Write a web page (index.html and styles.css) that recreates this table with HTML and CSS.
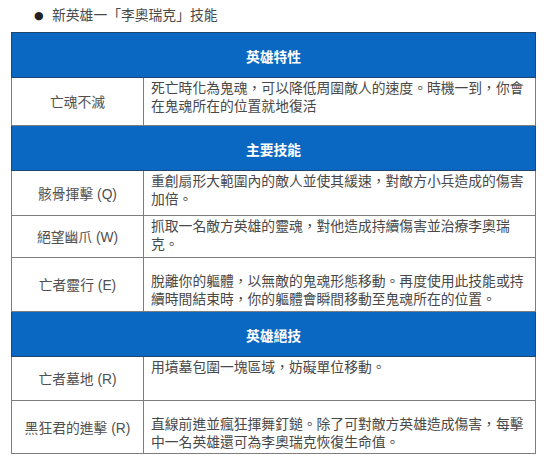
FILE: index.html
```html
<!DOCTYPE html>
<html lang="zh-Hant">
<head>
<meta charset="utf-8">
<title>新英雄一「李奧瑞克」技能</title>
<link rel="stylesheet" href="styles.css">
</head>
<body>
<div class="page">
  <p class="title"><span class="dot">●</span>新英雄一「李奧瑞克」技能</p>
  <table class="skills">
    <colgroup><col class="c-name"><col class="c-desc"></colgroup>
    <tr class="head"><th colspan="2">英雄特性</th></tr>
    <tr class="r-trait">
      <td class="name">亡魂不滅</td>
      <td class="desc">死亡時化為鬼魂，可以降低周圍敵人的速度。時機一到，你會<br>在鬼魂所在的位置就地復活</td>
    </tr>
    <tr class="head"><th colspan="2">主要技能</th></tr>
    <tr class="r-q">
      <td class="name">骸骨揮擊 (Q)</td>
      <td class="desc">重創扇形大範圍內的敵人並使其緩速，對敵方小兵造成的傷害<br>加倍。</td>
    </tr>
    <tr class="r-w">
      <td class="name">絕望幽爪 (W)</td>
      <td class="desc">抓取一名敵方英雄的靈魂，對他造成持續傷害並治療李奧瑞<br>克。</td>
    </tr>
    <tr class="r-e">
      <td class="name">亡者靈行 (E)</td>
      <td class="desc low">脫離你的軀體，以無敵的鬼魂形態移動。再度使用此技能或持<br>續時間結束時，你的軀體會瞬間移動至鬼魂所在的位置。</td>
    </tr>
    <tr class="head"><th colspan="2">英雄絕技</th></tr>
    <tr class="r-r1">
      <td class="name">亡者墓地 (R)</td>
      <td class="desc">用墳墓包圍一塊區域，妨礙單位移動。</td>
    </tr>
    <tr class="r-r2">
      <td class="name">黑狂君的進擊 (R)</td>
      <td class="desc low">直線前進並瘋狂揮舞釘鎚。除了可對敵方英雄造成傷害，每擊<br>中一名英雄還可為李奧瑞克恢復生命值。</td>
    </tr>
  </table>
</div>
</body>
</html>
```

FILE: styles.css
```css
html, body {
  margin: 0;
  padding: 0;
  background: #ffffff;
}

.page {
  padding: 7px 0 0 11px;
  font-family: "Liberation Sans", "Noto Sans CJK TC", sans-serif;
  color: #444444;
}

.title {
  margin: 0 0 7px 0;
  height: 18px;
  line-height: 18px;
  font-size: 13.8px;
  color: #4a4a4a;
  padding-left: 23px;
  display: flex;
  align-items: center;
}

.dot {
  font-size: 11px;
  width: 18px;
  color: #222222;
  font-family: "DejaVu Sans", sans-serif;
}

.skills {
  border-collapse: collapse;
  table-layout: fixed;
  width: 524px;
  border: 1px solid #8a8a8a;
  font-size: 13.8px;
  line-height: 18px;
}

.c-name { width: 132px; }
.c-desc { width: 392px; }

.head th {
  height: 45px;
  box-sizing: border-box;
  padding: 5px 0 0 0;
  background: #0b68c2;
  color: #ffffff;
  font-weight: bold;
  font-size: 13.8px;
  border: 1px solid #1f4670;
  text-align: center;
  vertical-align: middle;
}

td {
  border: 1px solid #7d7d7d;
  padding: 0;
  box-sizing: border-box;
}

td.name {
  text-align: center;
  vertical-align: middle;
  color: #505050;
  padding-top: 3px;
}

td.desc {
  vertical-align: top;
  padding: 2px 4px 0 7px;
  white-space: nowrap;
  color: #484848;
}

td.desc.low {
  padding-top: 15px;
}

.r-trait td { height: 48px; }
.r-q td { height: 45px; }
.r-w td { height: 42px; }
.r-e td { height: 54px; }
.r-r1 td { height: 44px; }
.r-r2 td { height: 53px; }
```
